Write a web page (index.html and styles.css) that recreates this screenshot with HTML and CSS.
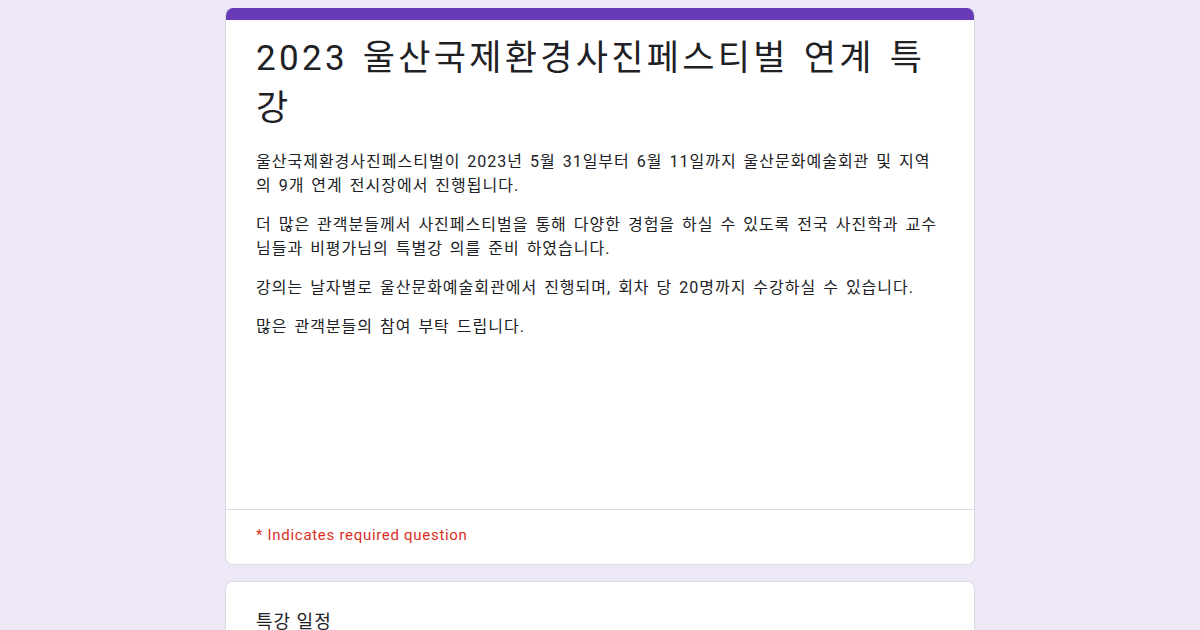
FILE: index.html
```html
<!DOCTYPE html>
<html lang="ko">

<head>
  <meta charset="UTF-8">
  <meta name="viewport" content="width=device-width, initial-scale=1.0">
  <title>2023 울산국제환경사진페스티벌 연계 특강</title>
  <link rel="stylesheet" href="styles.css">
</head>

<body>
  <div class="form">

    <!-- Header card -->
    <div class="card header-card">
      <div class="accent"></div>
      <div class="header-body">
        <h1 class="form-title">2023 울산국제환경사진페스티벌 연계 특강</h1>
        <div class="description">
          <p>울산국제환경사진페스티벌이 2023년 5월 31일부터 6월 11일까지 울산문화예술회관 및 지역의 9개 연계 전시장에서 진행됩니다.</p>
          <p>더 많은 관객분들께서 사진페스티벌을 통해 다양한 경험을 하실 수 있도록 전국 사진학과 교수님들과 비평가님의 특별강 의를 준비 하였습니다.</p>
          <p>강의는 날자별로 울산문화예술회관에서 진행되며, 회차 당 20명까지 수강하실 수 있습니다.</p>
          <p>많은 관객분들의 참여 부탁 드립니다.</p>
        </div>
      </div>
      <div class="required-note">* Indicates required question</div>
    </div>

    <!-- Question card -->
    <div class="card question-card">
      <div class="question-title">특강 일정</div>
    </div>

  </div>
</body>

</html>
```

FILE: styles.css
```css
body {
  font-family: Roboto, "Noto Sans CJK KR", sans-serif;
  background: #ede7f6;
  color: #202124;
  margin: 0;
  padding: 0;
}

.form {
  width: 750px;
  margin: 8px auto 0;
  display: flex;
  flex-direction: column;
  gap: 16px;
}

.card {
  background: #ffffff;
  border: 1px solid #dadce0;
  border-radius: 8px;
}

.header-card {
  border-top: none;
  overflow: hidden;
}

.accent {
  height: 12px;
  background: #673ab7;
}

.header-body {
  padding: 14px 30px 170px;
  border-bottom: 1px solid #dadce0;
}

.form-title {
  font-size: 35px;
  font-weight: 400;
  line-height: 50px;
  letter-spacing: 3.3px;
  word-spacing: 3px;
  margin: 0 0 16px;
}

.description p {
  font-size: 16px;
  line-height: 24px;
  letter-spacing: 1px;
  word-spacing: 2px;
  margin: 0 0 15px;
}

.description p:last-child {
  margin-bottom: 0;
}

.required-note {
  color: #d93025;
  font-size: 15px;
  line-height: 20px;
  letter-spacing: 0.7px;
  padding: 15px 30px 19px;
}

.question-card {
  padding: 28px 30px 40px;
}

.question-title {
  font-size: 18px;
  line-height: 24px;
  letter-spacing: 1px;
}
```
